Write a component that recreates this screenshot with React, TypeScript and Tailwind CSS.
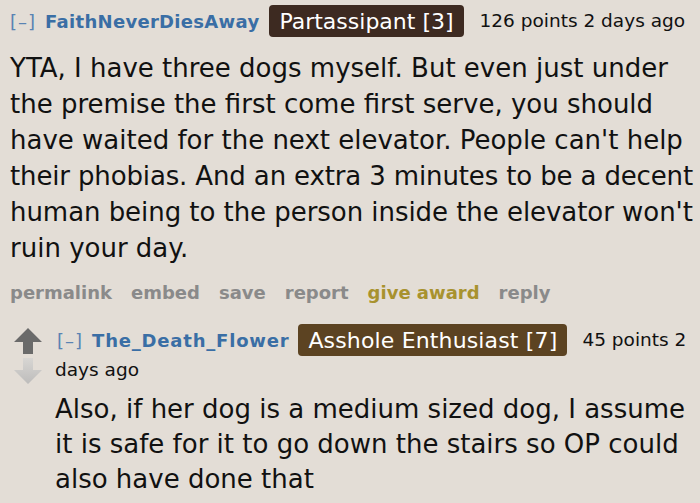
import React from "react";

const font = { fontFamily: '"DejaVu Sans", Verdana, sans-serif' };

function Line({ children, className = "" }: { children: React.ReactNode; className?: string }) {
  return <span className={"block whitespace-nowrap " + className}>{children}</span>;
}

function UpArrow() {
  return (
    <svg width="28" height="26" viewBox="0 0 28 26">
      <path d="M14 0 L28 14 L19 14 L19 26 L9 26 L9 14 L0 14 Z" fill="#6a6a6a" />
    </svg>
  );
}

function DownArrow() {
  return (
    <svg width="28" height="26" viewBox="0 0 28 26">
      <defs>
        <linearGradient id="dg" x1="0" y1="0" x2="0" y2="1">
          <stop offset="0" stopColor="#d8d6d3" />
          <stop offset="1" stopColor="#bdbcbb" />
        </linearGradient>
      </defs>
      <path d="M9 0 L19 0 L19 12 L28 12 L14 26 L0 12 L9 12 Z" fill="url(#dg)" />
    </svg>
  );
}

export default function App() {
  return (
    <div className="w-[700px] h-[503px] overflow-hidden bg-[#e3ddd6] text-[#111]" style={font}>
      {/* Comment 1 */}
      <div className="pl-[10px] pt-[5px]">
        <div className="flex items-center h-[32px]">
          <span className="text-[18px] tracking-[1px] text-[#5a83b3]">[–]</span>
          <span className="ml-[9px] text-[18px] tracking-[0.3px] font-bold text-[#3a6ea5]">FaithNeverDiesAway</span>
          <span className="ml-[10px] h-[32px] flex items-center px-[10px] rounded-[4px] bg-[#3d2a21] text-white text-[22px]">
            Partassipant [3]
          </span>
          <span className="ml-[16px] text-[18.5px]">126 points 2 days ago</span>
        </div>
        <div className="mt-[13px] text-[26px] leading-[36px]">
          <Line>YTA, I have three dogs myself. But even just under</Line>
          <Line>the premise the first come first serve, you should</Line>
          <Line>have waited for the next elevator. People can't help</Line>
          <Line className="tracking-[-0.14px]">their phobias. And an extra 3 minutes to be a decent</Line>
          <Line className="tracking-[-0.05px]">human being to the person inside the elevator won't</Line>
          <Line>ruin your day.</Line>
        </div>
        <div className="mt-[15px] flex gap-[19px] text-[18px] leading-[24px] font-bold text-[#8a8a8a]">
          <span>permalink</span>
          <span>embed</span>
          <span>save</span>
          <span>report</span>
          <span className="text-[#a8922e]">give award</span>
          <span>reply</span>
        </div>
      </div>

      {/* Comment 2 */}
      <div className="mt-[19px] flex pl-[14px]">
        <div className="flex flex-col gap-[4px] pt-[4px] w-[41px]">
          <UpArrow />
          <DownArrow />
        </div>
        <div>
          <div className="flex items-center h-[32px]">
            <span className="ml-[2px] text-[18px] tracking-[1px] text-[#5a83b3]">[–]</span>
            <span className="ml-[9px] text-[18px] tracking-[0.8px] font-bold text-[#3a6ea5]">The_Death_Flower</span>
            <span className="ml-[9px] h-[32px] flex items-center px-[10px] rounded-[4px] bg-[#5c4322] text-white text-[22px] tracking-[0.15px]">
              Asshole Enthusiast [7]
            </span>
            <span className="ml-[15px] text-[18.5px]">45 points 2</span>
          </div>
          <div className="mt-[2px] text-[18.5px] leading-[24px]">days ago</div>
          <div className="mt-[10px] text-[26px] leading-[35px]">
            <Line>Also, if her dog is a medium sized dog, I assume</Line>
            <Line>it is safe for it to go down the stairs so OP could</Line>
            <Line>also have done that</Line>
          </div>
        </div>
      </div>
    </div>
  );
}
